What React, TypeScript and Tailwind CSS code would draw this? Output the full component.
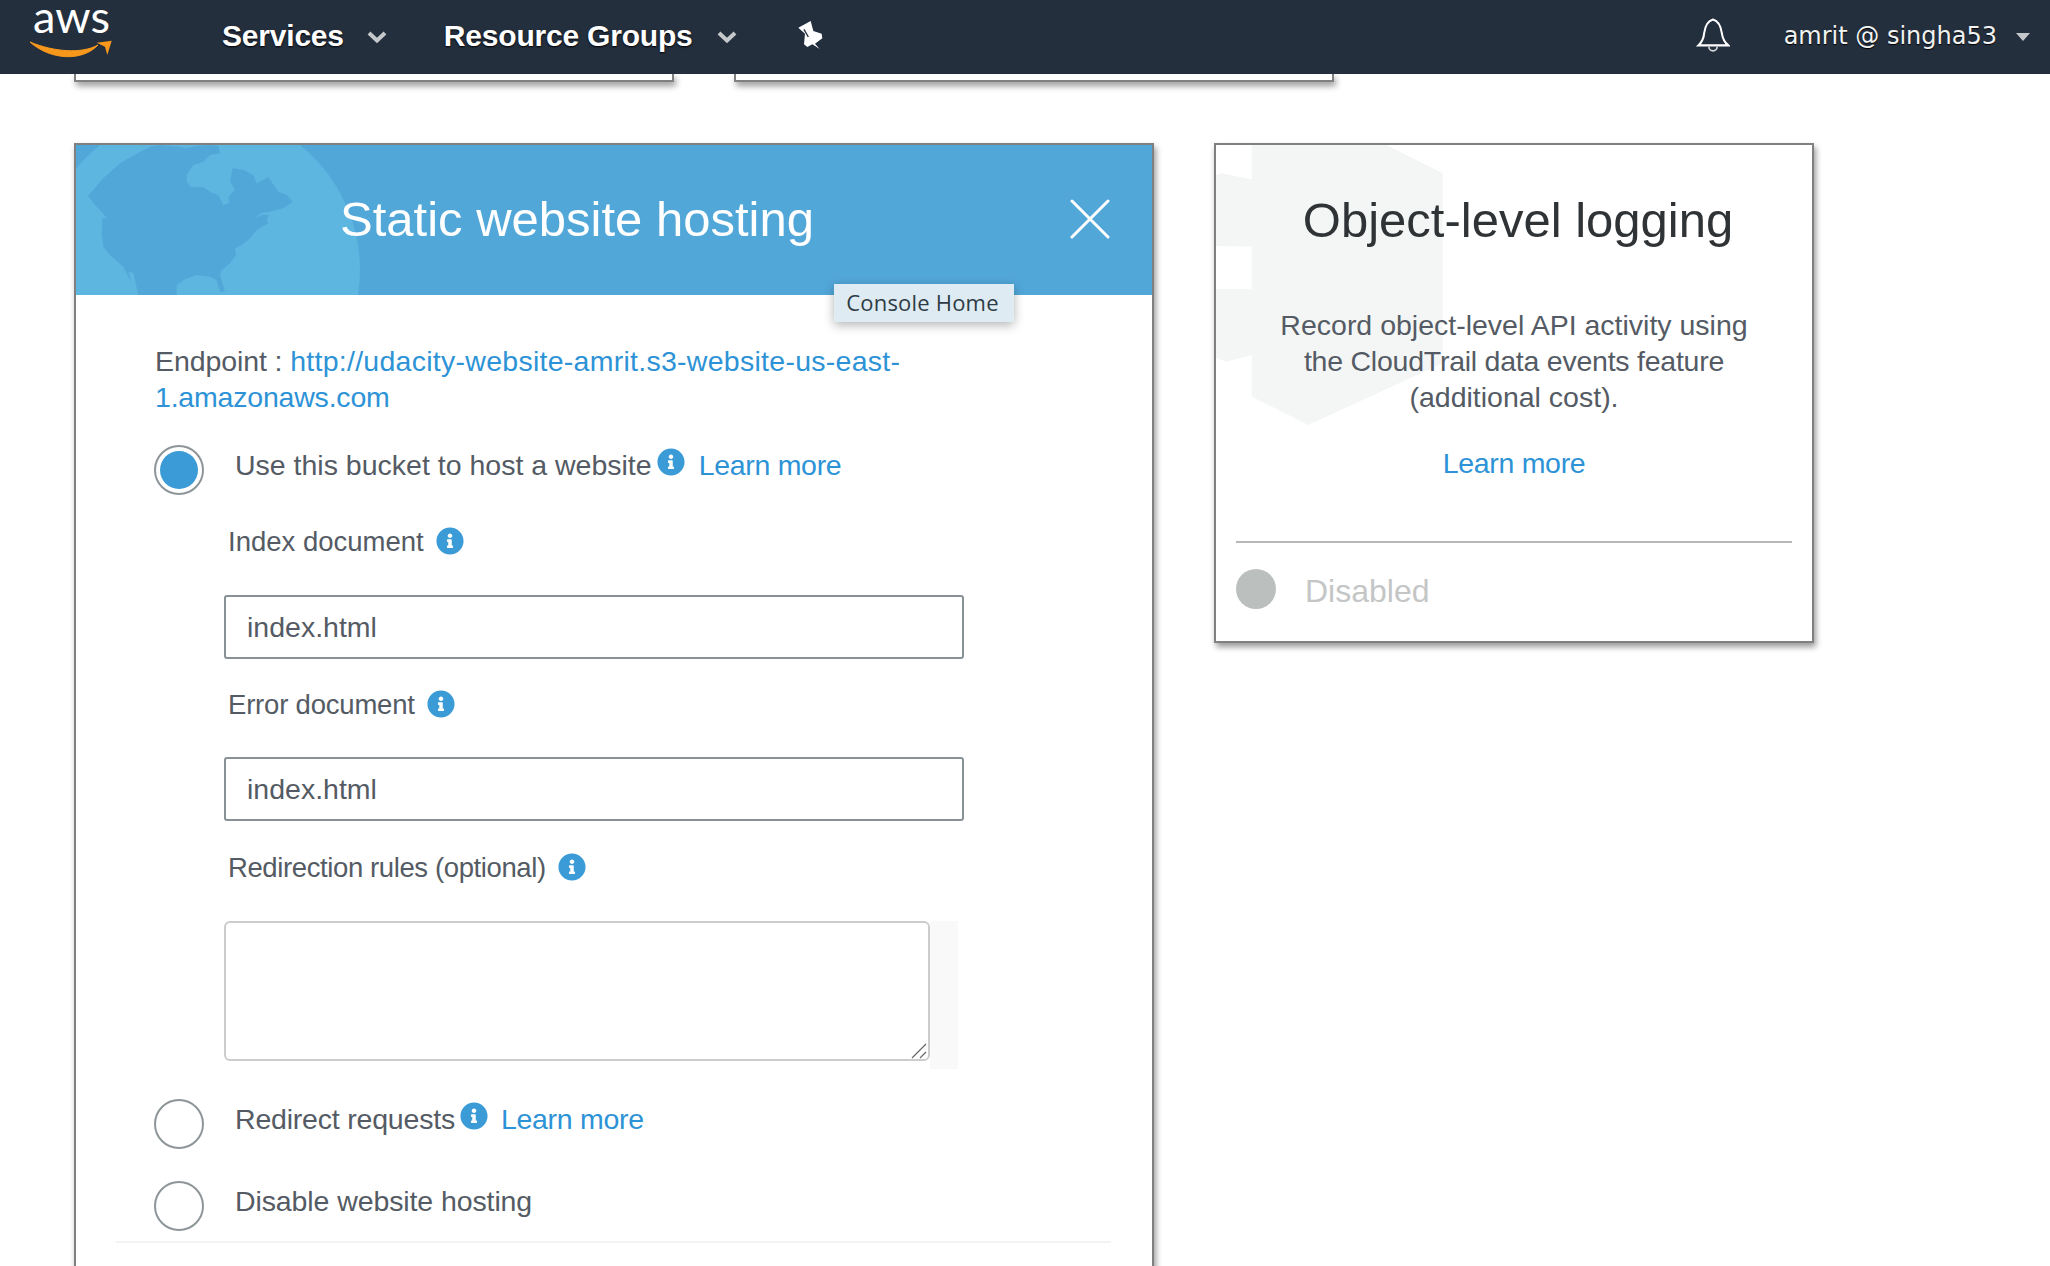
import React from 'react';
import { FaInfoCircle } from 'react-icons/fa';

const Info = () => <FaInfoCircle className="h-[28px] w-[28px] shrink-0 text-[#3a9bd7]" />;

const Chevron = () => (
  <svg viewBox="0 0 20 12" className="h-[12px] w-[20px] shrink-0">
    <path d="M2 2 L10 9.5 L18 2" fill="none" stroke="#c5c8cb" strokeWidth="4" />
  </svg>
);

function Radio({ checked = false }: { checked?: boolean }) {
  return (
    <div className="flex h-[50px] w-[50px] shrink-0 items-center justify-center rounded-full border-2 border-[#8d9599] bg-white">
      {checked && <div className="h-[38px] w-[38px] rounded-full bg-[#3a9bd7]" />}
    </div>
  );
}

function AwsLogo() {
  return (
    <div className="relative h-[74px] w-[108px] shrink-0">
      <span className="absolute left-[5px] top-[1px] font-['Lato',sans-serif] text-[45px] leading-[30px] text-white">aws</span>
      <svg viewBox="0 0 110 70" className="absolute left-0 top-0 h-[70px] w-[110px]">
        <path d="M2 42 C22 60 54 62 70 45 C54 54 26 52 2 42 Z" fill="#f7981d" stroke="#f7981d" strokeWidth="1" />
        <path d="M68.7 42.7 L83.7 40.7 L79.3 55 L77 46.7 Z" fill="#f7981d" />
      </svg>
    </div>
  );
}

const FieldLabel = ({ text, className }: { text: string; className: string }) => (
  <div className={`ml-[152px] flex h-[36px] items-center gap-[12px] text-[27.5px] ${className}`}>
    <span className="pt-[2px]">{text}</span>
    <Info />
  </div>
);

const TextField = ({ className }: { className: string }) => (
  <input
    defaultValue="index.html"
    className={`ml-[148px] block h-[64px] w-[740px] rounded-[3px] border-2 border-[#879196] bg-white px-[21px] text-[28.5px] text-[#545b64] ${className}`}
  />
);

export default function App() {
  return (
    <div className="h-[1266px] overflow-hidden bg-white font-['Liberation_Sans',sans-serif] text-[#545b64]">
      {/* Console nav */}
      <nav className="relative z-10 flex h-[74px] items-center bg-[#242f3e] pl-[28px] pr-[20px] text-white">
        <AwsLogo />
        <span className="mb-[4px] ml-[86px] text-[30px] font-bold tracking-[-0.2px] [text-shadow:0_1px_2px_#000]">Services</span>
        <span className="ml-[23px]"><Chevron /></span>
        <span className="mb-[4px] ml-[57px] text-[30px] font-bold tracking-[-0.2px] [text-shadow:0_1px_2px_#000]">Resource Groups</span>
        <span className="ml-[24px]"><Chevron /></span>
        <svg viewBox="0 0 180 150" className="mb-[3px] ml-[42px] h-[50px] w-[60px] shrink-0">
          <polygon points="58,50 95,30 103,60 128,68 130,82 108,98 122,114 100,100 85,108 75,100 78,68" fill="#fff" />
          <path d="M75 55 L88 78" stroke="#242f3e" strokeWidth="4" />
        </svg>
        <svg viewBox="50 20 100 105" className="mb-[6px] ml-auto h-[36px] w-[34px] shrink-0">
          <path d="M100 30 C82 35 76 55 74 70 C73 85 66 98 57 106 H145 C135 98 128 85 126 70 C124 55 118 35 100 30 Z" fill="none" stroke="#fff" strokeWidth="6" />
          <path d="M88 110 A12 12 0 0 0 112 110" fill="none" stroke="#d5d8da" strokeWidth="5" />
        </svg>
        <span className="mb-[2px] ml-[54px] font-['DejaVu_Sans',sans-serif] text-[24px] text-[#f2f3f3] [text-shadow:0_1px_1px_#000]">amrit @ singha53</span>
        <svg viewBox="0 0 14 8" className="ml-[19px] h-[8px] w-[14px] shrink-0">
          <path d="M0 0 H14 L7 8 Z" fill="#c5c8cb" />
        </svg>
      </nav>

      {/* Bottom edges of the cards scrolled under the nav */}
      <div className="flex gap-[60px] pl-[74px]">
        <div className="h-[8px] w-[600px] border-x-2 border-b-2 border-[#808080] shadow-[2px_4px_6px_rgba(0,0,0,0.4)]" />
        <div className="h-[8px] w-[600px] border-x-2 border-b-2 border-[#808080] shadow-[2px_4px_6px_rgba(0,0,0,0.4)]" />
      </div>

      <div className="mt-[61px] flex items-start gap-[60px] pl-[74px]">
        {/* Static website hosting */}
        <div className="relative h-[1200px] w-[1080px] shrink-0 border-2 border-[#808080] shadow-[2px_4px_6px_rgba(0,0,0,0.4)]">
          <div className="relative flex h-[150px] items-center overflow-hidden bg-[#52a7d9] pl-[264px]">
            <svg viewBox="0 0 930 480" className="absolute left-[-6px] top-[-5px] h-[160px] w-[310px]">
              <circle cx="390" cy="390" r="480" fill="#5cb6e0" />
              <path
                d="M52 170 L100 115 L150 70 L210 35 L240 20 L270 15 L330 20 L345 25 L380 18 L420 15 L445 18 L450 40 L420 45 L400 65 L370 75 L350 105 L350 125 L362 140 L400 142 L425 158 L445 165 L460 195 L478 190 L475 170 L495 150 L480 125 L488 85 L520 90 L550 105 L560 130 L595 112 L625 155 L650 165 L668 185 L640 205 L600 215 L575 218 L550 238 L575 225 L597 225 L590 240 L595 250 L560 270 L540 295 L515 315 L495 325 L498 345 L480 370 L455 390 L450 405 L465 455 L450 455 L440 420 L420 410 L380 405 L345 418 L320 435 L320 470 L205 470 L160 380 L120 345 L100 320 L95 280 L98 235 L110 235 L95 215 L70 190 L60 175 Z"
                fill="#52a7d9"
              />
              <path d="M175 395 L190 398 L205 465 L195 465 Z" fill="#5cb6e0" />
            </svg>
            <h1 className="relative mb-[2px] text-[49px] leading-none text-white">Static website hosting</h1>
            <svg viewBox="0 0 40 40" className="absolute left-[994px] top-[54px] h-[40px] w-[40px]">
              <path d="M2 2 L38 38 M38 2 L2 38" stroke="#fff" strokeWidth="3" strokeLinecap="round" />
            </svg>
          </div>

          {/* tooltip left over from the nav */}
          <div className="absolute left-[758px] top-[139px] z-10 flex h-[38px] w-[180px] items-center justify-center bg-[#deebf2] pb-[2px] pr-[3px] font-['Open_Sans',sans-serif] text-[22px] tracking-[0.2px] text-[#2e3c47] shadow-[0_3px_10px_rgba(0,0,0,0.3)]">
            Console Home
          </div>

          <div className="pt-[48px]">
            <p className="ml-[79px] text-[28.5px] leading-[36px] tracking-[-0.1px]">
              Endpoint : <a className="tracking-[0.27px] text-[#2d93d6]">http://udacity-website-amrit.s3-website-us-east-</a><br />
              <a className="tracking-[-0.2px] text-[#2d93d6]">1.amazonaws.com</a>
            </p>

            <div className="ml-[78px] mt-[30px] flex items-start">
              <Radio checked />
              <div className="ml-[31px] mt-[2px] flex items-center text-[28.5px] leading-[36px]">
                <span>Use this bucket to host a website</span>
                <span className="mb-[6px] ml-[5px]"><Info /></span>
                <a className="ml-[14px] tracking-[-0.3px] text-[#2d93d6]">Learn more</a>
              </div>
            </div>

            <FieldLabel text="Index document" className="mt-[28px]" />
            <TextField className="mt-[36px]" />
            <FieldLabel text="Error document" className="mt-[27px] tracking-[-0.2px]" />
            <TextField className="mt-[35px]" />
            <FieldLabel text="Redirection rules (optional)" className="mt-[28px] tracking-[-0.39px]" />

            <div className="ml-[148px] mt-[36px] flex items-start">
              <div className="relative h-[140px] w-[706px]">
                <textarea className="block h-[140px] w-[706px] resize-none rounded-[6px] border-2 border-[#cccccc] bg-white" />
                <svg viewBox="0 0 16 16" className="absolute bottom-[2px] right-[3px] h-[16px] w-[16px]">
                  <path d="M1 15 L15 1 M9 15 L15 9" stroke="#666" strokeWidth="1.2" />
                </svg>
              </div>
              <div className="h-[148px] w-[28px] bg-[#f9f9f9]" />
            </div>

            <div className="ml-[78px] mt-[30px] flex items-start">
              <Radio />
              <div className="ml-[31px] mt-[2px] flex items-center text-[28.5px] leading-[36px] tracking-[-0.2px]">
                <span>Redirect requests</span>
                <span className="mb-[6px] ml-[5px]"><Info /></span>
                <a className="ml-[13px] tracking-[-0.3px] text-[#2d93d6]">Learn more</a>
              </div>
            </div>

            <div className="ml-[78px] mt-[32px] flex items-start">
              <Radio />
              <div className="ml-[31px] mt-[2px] text-[28.5px] leading-[36px] tracking-[-0.1px]">Disable website hosting</div>
            </div>

            <div className="ml-[40px] mt-[10px] h-[2px] w-[995px] bg-[#f2f3f3]" />
          </div>
        </div>

        {/* Object-level logging */}
        <div className="relative flex h-[500px] w-[600px] shrink-0 flex-col items-center border-2 border-[#808080] shadow-[2px_4px_6px_rgba(0,0,0,0.4)]">
          <svg viewBox="0 0 780 900" className="absolute left-[-6px] top-[-5px] h-[300px] w-[260px]">
            <path d="M125 15 H530 L698 100 V670 L295 855 L125 770 Z M18 105 L35 100 L125 118 V320 L18 318 Z M18 448 H125 V645 L50 665 L18 655 Z" fill="#f4f6f6" />
          </svg>
          <h2 className="relative ml-[8px] mt-[47px] text-[49px] leading-[56px] text-[#2f3336]">Object-level logging</h2>
          <p className="relative mt-[59px] text-center text-[28.5px] leading-[36px] text-[#545b64]">
            Record object-level API activity using<br />
            <span className="tracking-[-0.24px]">the CloudTrail data events feature</span><br />
            (additional cost).
          </p>
          <a className="relative mt-[30px] text-[28.5px] leading-[36px] tracking-[-0.3px] text-[#2d93d6]">Learn more</a>
          <div className="mt-[60px] h-[2px] w-[556px] bg-[#b8b8b8]" />
          <div className="mt-[26px] flex w-[556px] items-start">
            <div className="h-[40px] w-[40px] rounded-full bg-[#bbbfbd]" />
            <span className="ml-[29px] mt-[2px] text-[32px] leading-[40px] text-[#c4c6c6]">Disabled</span>
          </div>
        </div>
      </div>
    </div>
  );
}
